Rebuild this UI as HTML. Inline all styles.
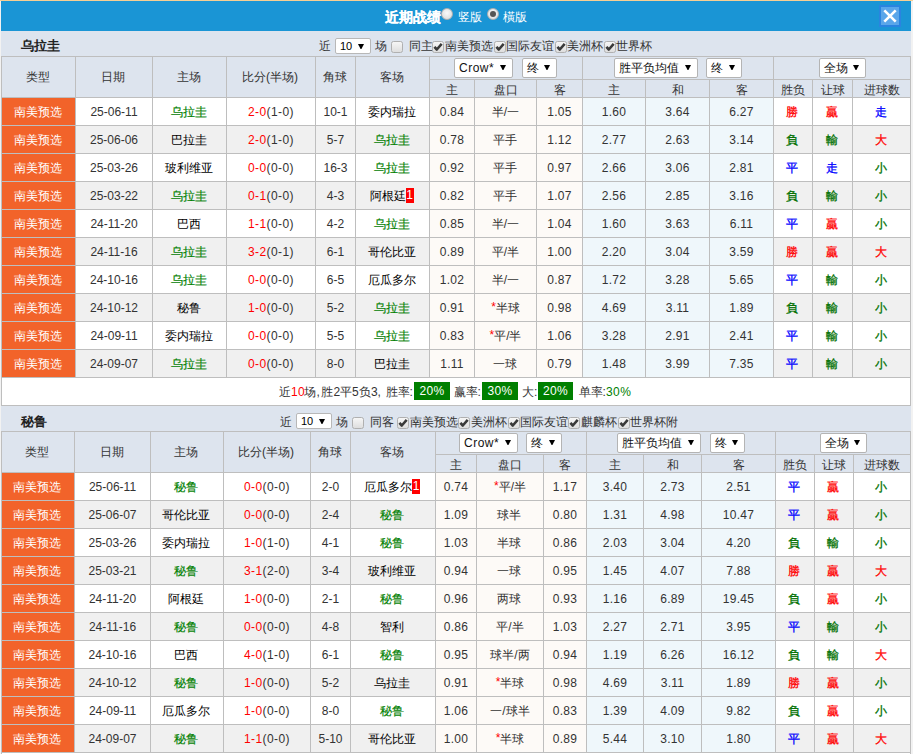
<!DOCTYPE html><html><head><meta charset="utf-8"><style>
*{margin:0;padding:0;box-sizing:border-box}
html,body{width:913px;height:754px;overflow:hidden;background:#f2f2f2;position:relative;font-family:"Liberation Sans", sans-serif;font-size:12px}
body>div,body>svg{position:absolute}
.c{text-align:center;white-space:nowrap;overflow:hidden}
.t{white-space:nowrap;line-height:14px}
.sel{background:#fff;border:1px solid #b4b4b4;border-radius:2px;color:#111;white-space:nowrap;font-size:12px;padding-left:4px}
.sel i{position:absolute;right:6px;top:6px;line-height:0}
.sel2{position:absolute;width:36px;height:16px;line-height:15px;background:#fff;border:1px solid #b8b8b8;border-radius:2px;color:#000;padding-left:4px;font-size:11px}
.sel2 i{position:absolute;right:6px;top:5px;line-height:0}
.cb{position:absolute;width:12px;height:12px;border:1px solid #b0b0b0;border-radius:2.5px;background:linear-gradient(#f6f6f6,#dedede)}
.cb svg{position:absolute;left:-1px;top:-1px}
.rad{position:absolute;width:12px;height:12px;border-radius:50%;background:radial-gradient(circle at 50% 40%,#fafafa,#d8d8d8);border:1px solid #b0b0b0}
.rad.on::after{content:"";position:absolute;left:2px;top:2px;width:6px;height:6px;border-radius:50%;background:#555}
.card{display:inline-block;background:#f00;color:#fff;font-weight:normal;width:8px;height:15px;line-height:15px;text-align:center;vertical-align:middle;margin-top:-2px}
.ast{color:#f00;vertical-align:top;position:relative;top:-1px}
.gb{position:absolute;background:#007f00;color:#fff;font-size:12px;height:18px;line-height:19px;text-align:center;letter-spacing:0.3px}
</style></head><body>
<div style="left:0px;top:0px;width:913px;height:1px;background:#f6cf94;"></div>
<div style="left:1px;top:1px;width:910px;height:30px;background:#1a95d5;"></div>
<div class="t" style="left:385px;top:8.5px;color:#fff;font-size:14px;font-weight:bold;line-height:16px;-webkit-text-stroke:0.15px #fff">近期战绩</div>
<div class="rad" style="left:441px;top:8px"></div>
<div class="t" style="left:458px;top:10px;color:#fff;font-size:12px;line-height:14px">竖版</div>
<div class="rad on" style="left:487px;top:8px"></div>
<div class="t" style="left:503px;top:10px;color:#fff;font-size:12px;line-height:14px">橫版</div>
<div style="left:879px;top:5px;width:22px;height:22px;background:#2a84e0;"></div>
<div style="left:881px;top:7px;width:18px;height:18px;background:#5aa6ea;"></div>
<svg style="position:absolute;left:883px;top:9px" width="14" height="14" viewBox="0 0 14 14"><path d="M1.3 1.3 L12.7 12.7 M12.7 1.3 L1.3 12.7" stroke="#fff" stroke-width="2.6"/></svg>
<div style="left:1px;top:31px;width:910px;height:25px;background:#dde4ee;"></div>
<div class="t" style="left:21px;top:38px;font-weight:bold;font-size:13px;color:#222;line-height:16px">乌拉圭</div>
<div class="t" style="left:319px;top:39px;color:#333333">近</div>
<div class="sel2" style="left:335px;top:38px"><span>10</span><i><svg width="6" height="5" viewBox="0 0 6 5"><path d="M0 0 H6 L3.4 5 H2.6 Z" fill="#000"/></svg></i></div>
<div class="t" style="left:375px;top:39px;color:#333333">场</div>
<div class="cb" style="left:391px;top:41px"></div>
<div class="t" style="left:409px;top:39px;color:#333333">同主</div>
<div class="cb" style="left:432px;top:41px"><svg width="12" height="12" viewBox="0 0 12 12"><path d="M2.4 5.9 L4.8 8.5 L9.7 2.9" fill="none" stroke="#3a3a3a" stroke-width="2.6" stroke-linejoin="round"/></svg></div>
<div class="t" style="left:445px;top:39px;color:#333333">南美预选</div>
<div class="cb" style="left:494px;top:41px"><svg width="12" height="12" viewBox="0 0 12 12"><path d="M2.4 5.9 L4.8 8.5 L9.7 2.9" fill="none" stroke="#3a3a3a" stroke-width="2.6" stroke-linejoin="round"/></svg></div>
<div class="t" style="left:506px;top:39px;color:#333333">国际友谊</div>
<div class="cb" style="left:555px;top:41px"><svg width="12" height="12" viewBox="0 0 12 12"><path d="M2.4 5.9 L4.8 8.5 L9.7 2.9" fill="none" stroke="#3a3a3a" stroke-width="2.6" stroke-linejoin="round"/></svg></div>
<div class="t" style="left:567px;top:39px;color:#333333">美洲杯</div>
<div class="cb" style="left:604px;top:41px"><svg width="12" height="12" viewBox="0 0 12 12"><path d="M2.4 5.9 L4.8 8.5 L9.7 2.9" fill="none" stroke="#3a3a3a" stroke-width="2.6" stroke-linejoin="round"/></svg></div>
<div class="t" style="left:616px;top:39px;color:#333333">世界杯</div>
<div style="left:1px;top:56px;width:910px;height:42px;background:#bebebe;"></div>
<div style="left:2px;top:57px;width:73px;height:40px;background:#dde4ee;"></div>
<div class="c" style="left:1px;top:57px;width:73px;height:40px;line-height:40px;color:#333333">类型</div>
<div style="left:76px;top:57px;width:76px;height:40px;background:#dde4ee;"></div>
<div class="c" style="left:75px;top:57px;width:76px;height:40px;line-height:40px;color:#333333">日期</div>
<div style="left:153px;top:57px;width:73px;height:40px;background:#dde4ee;"></div>
<div class="c" style="left:152px;top:57px;width:73px;height:40px;line-height:40px;color:#333333">主场</div>
<div style="left:227px;top:57px;width:88px;height:40px;background:#dde4ee;"></div>
<div class="c" style="left:226px;top:57px;width:88px;height:40px;line-height:40px;color:#333333">比分(半场)</div>
<div style="left:316px;top:57px;width:39px;height:40px;background:#dde4ee;"></div>
<div class="c" style="left:315px;top:57px;width:39px;height:40px;line-height:40px;color:#333333">角球</div>
<div style="left:356px;top:57px;width:73px;height:40px;background:#dde4ee;"></div>
<div class="c" style="left:355px;top:57px;width:73px;height:40px;line-height:40px;color:#333333">客场</div>
<div style="left:430px;top:57px;width:152px;height:22px;background:#dde4ee;"></div>
<div style="left:583px;top:57px;width:190px;height:22px;background:#dde4ee;"></div>
<div style="left:774px;top:57px;width:136px;height:22px;background:#dde4ee;"></div>
<div style="left:430px;top:80px;width:44px;height:17px;background:#dde4ee;"></div>
<div class="c" style="left:430px;top:82px;width:44px;height:17px;line-height:17px;color:#333333">主</div>
<div style="left:475px;top:80px;width:61px;height:17px;background:#dde4ee;"></div>
<div class="c" style="left:475px;top:82px;width:61px;height:17px;line-height:17px;color:#333333">盘口</div>
<div style="left:537px;top:80px;width:45px;height:17px;background:#dde4ee;"></div>
<div class="c" style="left:537px;top:82px;width:45px;height:17px;line-height:17px;color:#333333">客</div>
<div style="left:583px;top:80px;width:62px;height:17px;background:#dde4ee;"></div>
<div class="c" style="left:583px;top:82px;width:62px;height:17px;line-height:17px;color:#333333">主</div>
<div style="left:646px;top:80px;width:63px;height:17px;background:#dde4ee;"></div>
<div class="c" style="left:646px;top:82px;width:63px;height:17px;line-height:17px;color:#333333">和</div>
<div style="left:710px;top:80px;width:63px;height:17px;background:#dde4ee;"></div>
<div class="c" style="left:710px;top:82px;width:63px;height:17px;line-height:17px;color:#333333">客</div>
<div style="left:774px;top:80px;width:38px;height:17px;background:#dde4ee;"></div>
<div class="c" style="left:774px;top:82px;width:38px;height:17px;line-height:17px;color:#333333">胜负</div>
<div style="left:813px;top:80px;width:39px;height:17px;background:#dde4ee;"></div>
<div class="c" style="left:813px;top:82px;width:39px;height:17px;line-height:17px;color:#333333">让球</div>
<div style="left:853px;top:80px;width:57px;height:17px;background:#dde4ee;"></div>
<div class="c" style="left:853px;top:82px;width:57px;height:17px;line-height:17px;color:#333333">进球数</div>
<div class="sel" style="left:454px;top:58px;width:59px;height:20px;line-height:18px"><span style="letter-spacing:0.5px">Crow*</span><i><svg width="6" height="5" viewBox="0 0 6 5"><path d="M0 0 H6 L3.4 5 H2.6 Z" fill="#000"/></svg></i></div>
<div class="sel" style="left:522px;top:58px;width:35px;height:20px;line-height:18px"><span style="">终</span><i><svg width="6" height="5" viewBox="0 0 6 5"><path d="M0 0 H6 L3.4 5 H2.6 Z" fill="#000"/></svg></i></div>
<div class="sel" style="left:614px;top:58px;width:84px;height:20px;line-height:18px"><span style="">胜平负均值</span><i><svg width="6" height="5" viewBox="0 0 6 5"><path d="M0 0 H6 L3.4 5 H2.6 Z" fill="#000"/></svg></i></div>
<div class="sel" style="left:706px;top:58px;width:36px;height:20px;line-height:18px"><span style="">终</span><i><svg width="6" height="5" viewBox="0 0 6 5"><path d="M0 0 H6 L3.4 5 H2.6 Z" fill="#000"/></svg></i></div>
<div class="sel" style="left:819px;top:58px;width:47px;height:20px;line-height:18px"><span style="">全场</span><i><svg width="6" height="5" viewBox="0 0 6 5"><path d="M0 0 H6 L3.4 5 H2.6 Z" fill="#000"/></svg></i></div>
<div style="left:1px;top:97px;width:910px;height:29px;background:#bebebe;"></div>
<div style="left:2px;top:98px;width:73px;height:27px;background:#f2632a;"></div>
<div style="left:76px;top:98px;width:76px;height:27px;background:#ffffff;"></div>
<div style="left:153px;top:98px;width:73px;height:27px;background:#ffffff;"></div>
<div style="left:227px;top:98px;width:88px;height:27px;background:#ffffff;"></div>
<div style="left:316px;top:98px;width:39px;height:27px;background:#ffffff;"></div>
<div style="left:356px;top:98px;width:73px;height:27px;background:#ffffff;"></div>
<div style="left:430px;top:98px;width:44px;height:27px;background:#fdfaf7;"></div>
<div style="left:475px;top:98px;width:61px;height:27px;background:#fdfaf7;"></div>
<div style="left:537px;top:98px;width:45px;height:27px;background:#fdfaf7;"></div>
<div style="left:583px;top:98px;width:62px;height:27px;background:#eff7fb;"></div>
<div style="left:646px;top:98px;width:63px;height:27px;background:#eff7fb;"></div>
<div style="left:710px;top:98px;width:63px;height:27px;background:#eff7fb;"></div>
<div style="left:774px;top:98px;width:38px;height:27px;background:#ffffff;"></div>
<div style="left:813px;top:98px;width:39px;height:27px;background:#ffffff;"></div>
<div style="left:853px;top:98px;width:57px;height:27px;background:#ffffff;"></div>
<div class="c" style="left:1px;top:99px;width:73px;height:27px;line-height:27px;color:#fff">南美预选</div>
<div class="c" style="left:76px;top:99px;width:76px;height:27px;line-height:27px;color:#333333">25-06-11</div>
<div class="c" style="left:152px;top:99px;width:73px;height:27px;line-height:27px;"><span style="color:#008000;-webkit-text-stroke:0.15px currentColor">乌拉圭</span></div>
<div class="c" style="left:227px;top:99px;width:88px;height:27px;line-height:27px;color:#333333;letter-spacing:0.4px"><span style="color:#ff0000">2-0</span>(1-0)</div>
<div class="c" style="left:316px;top:99px;width:39px;height:27px;line-height:27px;color:#333333">10-1</div>
<div class="c" style="left:355px;top:99px;width:73px;height:27px;line-height:27px;"><span style="color:#000">委内瑞拉</span></div>
<div class="c" style="left:430px;top:99px;width:44px;height:27px;line-height:27px;color:#333333;letter-spacing:0.3px">0.84</div>
<div class="c" style="left:475px;top:99px;width:61px;height:27px;line-height:27px;color:#333333">半/一</div>
<div class="c" style="left:537px;top:99px;width:45px;height:27px;line-height:27px;color:#333333;letter-spacing:0.3px">1.05</div>
<div class="c" style="left:583px;top:99px;width:62px;height:27px;line-height:27px;color:#333333;letter-spacing:0.3px">1.60</div>
<div class="c" style="left:646px;top:99px;width:63px;height:27px;line-height:27px;color:#333333;letter-spacing:0.3px">3.64</div>
<div class="c" style="left:710px;top:99px;width:63px;height:27px;line-height:27px;color:#333333;letter-spacing:0.3px">6.27</div>
<div class="c" style="left:773px;top:99px;width:38px;height:27px;line-height:27px;color:#ff0000;-webkit-text-stroke:0.3px currentColor">勝</div>
<div class="c" style="left:812px;top:99px;width:39px;height:27px;line-height:27px;color:#ff0000;-webkit-text-stroke:0.3px currentColor">贏</div>
<div class="c" style="left:852px;top:99px;width:57px;height:27px;line-height:27px;color:#0000ff;-webkit-text-stroke:0.3px currentColor">走</div>
<div style="left:1px;top:125px;width:910px;height:29px;background:#bebebe;"></div>
<div style="left:2px;top:126px;width:73px;height:27px;background:#f2632a;"></div>
<div style="left:76px;top:126px;width:76px;height:27px;background:#f0f0f0;"></div>
<div style="left:153px;top:126px;width:73px;height:27px;background:#f0f0f0;"></div>
<div style="left:227px;top:126px;width:88px;height:27px;background:#f0f0f0;"></div>
<div style="left:316px;top:126px;width:39px;height:27px;background:#f0f0f0;"></div>
<div style="left:356px;top:126px;width:73px;height:27px;background:#f0f0f0;"></div>
<div style="left:430px;top:126px;width:44px;height:27px;background:#fdfaf7;"></div>
<div style="left:475px;top:126px;width:61px;height:27px;background:#fdfaf7;"></div>
<div style="left:537px;top:126px;width:45px;height:27px;background:#fdfaf7;"></div>
<div style="left:583px;top:126px;width:62px;height:27px;background:#eff7fb;"></div>
<div style="left:646px;top:126px;width:63px;height:27px;background:#eff7fb;"></div>
<div style="left:710px;top:126px;width:63px;height:27px;background:#eff7fb;"></div>
<div style="left:774px;top:126px;width:38px;height:27px;background:#f0f0f0;"></div>
<div style="left:813px;top:126px;width:39px;height:27px;background:#f0f0f0;"></div>
<div style="left:853px;top:126px;width:57px;height:27px;background:#f0f0f0;"></div>
<div class="c" style="left:1px;top:127px;width:73px;height:27px;line-height:27px;color:#fff">南美预选</div>
<div class="c" style="left:76px;top:127px;width:76px;height:27px;line-height:27px;color:#333333">25-06-06</div>
<div class="c" style="left:152px;top:127px;width:73px;height:27px;line-height:27px;"><span style="color:#000">巴拉圭</span></div>
<div class="c" style="left:227px;top:127px;width:88px;height:27px;line-height:27px;color:#333333;letter-spacing:0.4px"><span style="color:#ff0000">2-0</span>(1-0)</div>
<div class="c" style="left:316px;top:127px;width:39px;height:27px;line-height:27px;color:#333333">5-7</div>
<div class="c" style="left:355px;top:127px;width:73px;height:27px;line-height:27px;"><span style="color:#008000;-webkit-text-stroke:0.15px currentColor">乌拉圭</span></div>
<div class="c" style="left:430px;top:127px;width:44px;height:27px;line-height:27px;color:#333333;letter-spacing:0.3px">0.78</div>
<div class="c" style="left:474px;top:127px;width:61px;height:27px;line-height:27px;color:#333333">平手</div>
<div class="c" style="left:537px;top:127px;width:45px;height:27px;line-height:27px;color:#333333;letter-spacing:0.3px">1.12</div>
<div class="c" style="left:583px;top:127px;width:62px;height:27px;line-height:27px;color:#333333;letter-spacing:0.3px">2.77</div>
<div class="c" style="left:646px;top:127px;width:63px;height:27px;line-height:27px;color:#333333;letter-spacing:0.3px">2.63</div>
<div class="c" style="left:710px;top:127px;width:63px;height:27px;line-height:27px;color:#333333;letter-spacing:0.3px">3.14</div>
<div class="c" style="left:773px;top:127px;width:38px;height:27px;line-height:27px;color:#007000;-webkit-text-stroke:0.3px currentColor">負</div>
<div class="c" style="left:812px;top:127px;width:39px;height:27px;line-height:27px;color:#007000;-webkit-text-stroke:0.3px currentColor">輸</div>
<div class="c" style="left:852px;top:127px;width:57px;height:27px;line-height:27px;color:#ff0000;-webkit-text-stroke:0.3px currentColor">大</div>
<div style="left:1px;top:153px;width:910px;height:29px;background:#bebebe;"></div>
<div style="left:2px;top:154px;width:73px;height:27px;background:#f2632a;"></div>
<div style="left:76px;top:154px;width:76px;height:27px;background:#ffffff;"></div>
<div style="left:153px;top:154px;width:73px;height:27px;background:#ffffff;"></div>
<div style="left:227px;top:154px;width:88px;height:27px;background:#ffffff;"></div>
<div style="left:316px;top:154px;width:39px;height:27px;background:#ffffff;"></div>
<div style="left:356px;top:154px;width:73px;height:27px;background:#ffffff;"></div>
<div style="left:430px;top:154px;width:44px;height:27px;background:#fdfaf7;"></div>
<div style="left:475px;top:154px;width:61px;height:27px;background:#fdfaf7;"></div>
<div style="left:537px;top:154px;width:45px;height:27px;background:#fdfaf7;"></div>
<div style="left:583px;top:154px;width:62px;height:27px;background:#eff7fb;"></div>
<div style="left:646px;top:154px;width:63px;height:27px;background:#eff7fb;"></div>
<div style="left:710px;top:154px;width:63px;height:27px;background:#eff7fb;"></div>
<div style="left:774px;top:154px;width:38px;height:27px;background:#ffffff;"></div>
<div style="left:813px;top:154px;width:39px;height:27px;background:#ffffff;"></div>
<div style="left:853px;top:154px;width:57px;height:27px;background:#ffffff;"></div>
<div class="c" style="left:1px;top:155px;width:73px;height:27px;line-height:27px;color:#fff">南美预选</div>
<div class="c" style="left:76px;top:155px;width:76px;height:27px;line-height:27px;color:#333333">25-03-26</div>
<div class="c" style="left:152px;top:155px;width:73px;height:27px;line-height:27px;"><span style="color:#000">玻利维亚</span></div>
<div class="c" style="left:227px;top:155px;width:88px;height:27px;line-height:27px;color:#333333;letter-spacing:0.4px"><span style="color:#ff0000">0-0</span>(0-0)</div>
<div class="c" style="left:316px;top:155px;width:39px;height:27px;line-height:27px;color:#333333">16-3</div>
<div class="c" style="left:355px;top:155px;width:73px;height:27px;line-height:27px;"><span style="color:#008000;-webkit-text-stroke:0.15px currentColor">乌拉圭</span></div>
<div class="c" style="left:430px;top:155px;width:44px;height:27px;line-height:27px;color:#333333;letter-spacing:0.3px">0.92</div>
<div class="c" style="left:474px;top:155px;width:61px;height:27px;line-height:27px;color:#333333">平手</div>
<div class="c" style="left:537px;top:155px;width:45px;height:27px;line-height:27px;color:#333333;letter-spacing:0.3px">0.97</div>
<div class="c" style="left:583px;top:155px;width:62px;height:27px;line-height:27px;color:#333333;letter-spacing:0.3px">2.66</div>
<div class="c" style="left:646px;top:155px;width:63px;height:27px;line-height:27px;color:#333333;letter-spacing:0.3px">3.06</div>
<div class="c" style="left:710px;top:155px;width:63px;height:27px;line-height:27px;color:#333333;letter-spacing:0.3px">2.81</div>
<div class="c" style="left:773px;top:155px;width:38px;height:27px;line-height:27px;color:#0000ff;-webkit-text-stroke:0.3px currentColor">平</div>
<div class="c" style="left:812px;top:155px;width:39px;height:27px;line-height:27px;color:#0000ff;-webkit-text-stroke:0.3px currentColor">走</div>
<div class="c" style="left:852px;top:155px;width:57px;height:27px;line-height:27px;color:#007000;-webkit-text-stroke:0.3px currentColor">小</div>
<div style="left:1px;top:181px;width:910px;height:29px;background:#bebebe;"></div>
<div style="left:2px;top:182px;width:73px;height:27px;background:#f2632a;"></div>
<div style="left:76px;top:182px;width:76px;height:27px;background:#f0f0f0;"></div>
<div style="left:153px;top:182px;width:73px;height:27px;background:#f0f0f0;"></div>
<div style="left:227px;top:182px;width:88px;height:27px;background:#f0f0f0;"></div>
<div style="left:316px;top:182px;width:39px;height:27px;background:#f0f0f0;"></div>
<div style="left:356px;top:182px;width:73px;height:27px;background:#f0f0f0;"></div>
<div style="left:430px;top:182px;width:44px;height:27px;background:#fdfaf7;"></div>
<div style="left:475px;top:182px;width:61px;height:27px;background:#fdfaf7;"></div>
<div style="left:537px;top:182px;width:45px;height:27px;background:#fdfaf7;"></div>
<div style="left:583px;top:182px;width:62px;height:27px;background:#eff7fb;"></div>
<div style="left:646px;top:182px;width:63px;height:27px;background:#eff7fb;"></div>
<div style="left:710px;top:182px;width:63px;height:27px;background:#eff7fb;"></div>
<div style="left:774px;top:182px;width:38px;height:27px;background:#f0f0f0;"></div>
<div style="left:813px;top:182px;width:39px;height:27px;background:#f0f0f0;"></div>
<div style="left:853px;top:182px;width:57px;height:27px;background:#f0f0f0;"></div>
<div class="c" style="left:1px;top:183px;width:73px;height:27px;line-height:27px;color:#fff">南美预选</div>
<div class="c" style="left:76px;top:183px;width:76px;height:27px;line-height:27px;color:#333333">25-03-22</div>
<div class="c" style="left:152px;top:183px;width:73px;height:27px;line-height:27px;"><span style="color:#008000;-webkit-text-stroke:0.15px currentColor">乌拉圭</span></div>
<div class="c" style="left:227px;top:183px;width:88px;height:27px;line-height:27px;color:#333333;letter-spacing:0.4px"><span style="color:#ff0000">0-1</span>(0-0)</div>
<div class="c" style="left:316px;top:183px;width:39px;height:27px;line-height:27px;color:#333333">4-3</div>
<div class="c" style="left:355px;top:183px;width:73px;height:27px;line-height:27px;"><span style="color:#000">阿根廷</span><b class="card">1</b></div>
<div class="c" style="left:430px;top:183px;width:44px;height:27px;line-height:27px;color:#333333;letter-spacing:0.3px">0.82</div>
<div class="c" style="left:474px;top:183px;width:61px;height:27px;line-height:27px;color:#333333">平手</div>
<div class="c" style="left:537px;top:183px;width:45px;height:27px;line-height:27px;color:#333333;letter-spacing:0.3px">1.07</div>
<div class="c" style="left:583px;top:183px;width:62px;height:27px;line-height:27px;color:#333333;letter-spacing:0.3px">2.56</div>
<div class="c" style="left:646px;top:183px;width:63px;height:27px;line-height:27px;color:#333333;letter-spacing:0.3px">2.85</div>
<div class="c" style="left:710px;top:183px;width:63px;height:27px;line-height:27px;color:#333333;letter-spacing:0.3px">3.16</div>
<div class="c" style="left:773px;top:183px;width:38px;height:27px;line-height:27px;color:#007000;-webkit-text-stroke:0.3px currentColor">負</div>
<div class="c" style="left:812px;top:183px;width:39px;height:27px;line-height:27px;color:#007000;-webkit-text-stroke:0.3px currentColor">輸</div>
<div class="c" style="left:852px;top:183px;width:57px;height:27px;line-height:27px;color:#007000;-webkit-text-stroke:0.3px currentColor">小</div>
<div style="left:1px;top:209px;width:910px;height:29px;background:#bebebe;"></div>
<div style="left:2px;top:210px;width:73px;height:27px;background:#f2632a;"></div>
<div style="left:76px;top:210px;width:76px;height:27px;background:#ffffff;"></div>
<div style="left:153px;top:210px;width:73px;height:27px;background:#ffffff;"></div>
<div style="left:227px;top:210px;width:88px;height:27px;background:#ffffff;"></div>
<div style="left:316px;top:210px;width:39px;height:27px;background:#ffffff;"></div>
<div style="left:356px;top:210px;width:73px;height:27px;background:#ffffff;"></div>
<div style="left:430px;top:210px;width:44px;height:27px;background:#fdfaf7;"></div>
<div style="left:475px;top:210px;width:61px;height:27px;background:#fdfaf7;"></div>
<div style="left:537px;top:210px;width:45px;height:27px;background:#fdfaf7;"></div>
<div style="left:583px;top:210px;width:62px;height:27px;background:#eff7fb;"></div>
<div style="left:646px;top:210px;width:63px;height:27px;background:#eff7fb;"></div>
<div style="left:710px;top:210px;width:63px;height:27px;background:#eff7fb;"></div>
<div style="left:774px;top:210px;width:38px;height:27px;background:#ffffff;"></div>
<div style="left:813px;top:210px;width:39px;height:27px;background:#ffffff;"></div>
<div style="left:853px;top:210px;width:57px;height:27px;background:#ffffff;"></div>
<div class="c" style="left:1px;top:211px;width:73px;height:27px;line-height:27px;color:#fff">南美预选</div>
<div class="c" style="left:76px;top:211px;width:76px;height:27px;line-height:27px;color:#333333">24-11-20</div>
<div class="c" style="left:152px;top:211px;width:73px;height:27px;line-height:27px;"><span style="color:#000">巴西</span></div>
<div class="c" style="left:227px;top:211px;width:88px;height:27px;line-height:27px;color:#333333;letter-spacing:0.4px"><span style="color:#ff0000">1-1</span>(0-0)</div>
<div class="c" style="left:316px;top:211px;width:39px;height:27px;line-height:27px;color:#333333">4-2</div>
<div class="c" style="left:355px;top:211px;width:73px;height:27px;line-height:27px;"><span style="color:#008000;-webkit-text-stroke:0.15px currentColor">乌拉圭</span></div>
<div class="c" style="left:430px;top:211px;width:44px;height:27px;line-height:27px;color:#333333;letter-spacing:0.3px">0.85</div>
<div class="c" style="left:475px;top:211px;width:61px;height:27px;line-height:27px;color:#333333">半/一</div>
<div class="c" style="left:537px;top:211px;width:45px;height:27px;line-height:27px;color:#333333;letter-spacing:0.3px">1.04</div>
<div class="c" style="left:583px;top:211px;width:62px;height:27px;line-height:27px;color:#333333;letter-spacing:0.3px">1.60</div>
<div class="c" style="left:646px;top:211px;width:63px;height:27px;line-height:27px;color:#333333;letter-spacing:0.3px">3.63</div>
<div class="c" style="left:710px;top:211px;width:63px;height:27px;line-height:27px;color:#333333;letter-spacing:0.3px">6.11</div>
<div class="c" style="left:773px;top:211px;width:38px;height:27px;line-height:27px;color:#0000ff;-webkit-text-stroke:0.3px currentColor">平</div>
<div class="c" style="left:812px;top:211px;width:39px;height:27px;line-height:27px;color:#ff0000;-webkit-text-stroke:0.3px currentColor">贏</div>
<div class="c" style="left:852px;top:211px;width:57px;height:27px;line-height:27px;color:#007000;-webkit-text-stroke:0.3px currentColor">小</div>
<div style="left:1px;top:237px;width:910px;height:29px;background:#bebebe;"></div>
<div style="left:2px;top:238px;width:73px;height:27px;background:#f2632a;"></div>
<div style="left:76px;top:238px;width:76px;height:27px;background:#f0f0f0;"></div>
<div style="left:153px;top:238px;width:73px;height:27px;background:#f0f0f0;"></div>
<div style="left:227px;top:238px;width:88px;height:27px;background:#f0f0f0;"></div>
<div style="left:316px;top:238px;width:39px;height:27px;background:#f0f0f0;"></div>
<div style="left:356px;top:238px;width:73px;height:27px;background:#f0f0f0;"></div>
<div style="left:430px;top:238px;width:44px;height:27px;background:#fdfaf7;"></div>
<div style="left:475px;top:238px;width:61px;height:27px;background:#fdfaf7;"></div>
<div style="left:537px;top:238px;width:45px;height:27px;background:#fdfaf7;"></div>
<div style="left:583px;top:238px;width:62px;height:27px;background:#eff7fb;"></div>
<div style="left:646px;top:238px;width:63px;height:27px;background:#eff7fb;"></div>
<div style="left:710px;top:238px;width:63px;height:27px;background:#eff7fb;"></div>
<div style="left:774px;top:238px;width:38px;height:27px;background:#f0f0f0;"></div>
<div style="left:813px;top:238px;width:39px;height:27px;background:#f0f0f0;"></div>
<div style="left:853px;top:238px;width:57px;height:27px;background:#f0f0f0;"></div>
<div class="c" style="left:1px;top:239px;width:73px;height:27px;line-height:27px;color:#fff">南美预选</div>
<div class="c" style="left:76px;top:239px;width:76px;height:27px;line-height:27px;color:#333333">24-11-16</div>
<div class="c" style="left:152px;top:239px;width:73px;height:27px;line-height:27px;"><span style="color:#008000;-webkit-text-stroke:0.15px currentColor">乌拉圭</span></div>
<div class="c" style="left:227px;top:239px;width:88px;height:27px;line-height:27px;color:#333333;letter-spacing:0.4px"><span style="color:#ff0000">3-2</span>(0-1)</div>
<div class="c" style="left:316px;top:239px;width:39px;height:27px;line-height:27px;color:#333333">6-1</div>
<div class="c" style="left:355px;top:239px;width:73px;height:27px;line-height:27px;"><span style="color:#000">哥伦比亚</span></div>
<div class="c" style="left:430px;top:239px;width:44px;height:27px;line-height:27px;color:#333333;letter-spacing:0.3px">0.89</div>
<div class="c" style="left:475px;top:239px;width:61px;height:27px;line-height:27px;color:#333333">平/半</div>
<div class="c" style="left:537px;top:239px;width:45px;height:27px;line-height:27px;color:#333333;letter-spacing:0.3px">1.00</div>
<div class="c" style="left:583px;top:239px;width:62px;height:27px;line-height:27px;color:#333333;letter-spacing:0.3px">2.20</div>
<div class="c" style="left:646px;top:239px;width:63px;height:27px;line-height:27px;color:#333333;letter-spacing:0.3px">3.04</div>
<div class="c" style="left:710px;top:239px;width:63px;height:27px;line-height:27px;color:#333333;letter-spacing:0.3px">3.59</div>
<div class="c" style="left:773px;top:239px;width:38px;height:27px;line-height:27px;color:#ff0000;-webkit-text-stroke:0.3px currentColor">勝</div>
<div class="c" style="left:812px;top:239px;width:39px;height:27px;line-height:27px;color:#ff0000;-webkit-text-stroke:0.3px currentColor">贏</div>
<div class="c" style="left:852px;top:239px;width:57px;height:27px;line-height:27px;color:#ff0000;-webkit-text-stroke:0.3px currentColor">大</div>
<div style="left:1px;top:265px;width:910px;height:29px;background:#bebebe;"></div>
<div style="left:2px;top:266px;width:73px;height:27px;background:#f2632a;"></div>
<div style="left:76px;top:266px;width:76px;height:27px;background:#ffffff;"></div>
<div style="left:153px;top:266px;width:73px;height:27px;background:#ffffff;"></div>
<div style="left:227px;top:266px;width:88px;height:27px;background:#ffffff;"></div>
<div style="left:316px;top:266px;width:39px;height:27px;background:#ffffff;"></div>
<div style="left:356px;top:266px;width:73px;height:27px;background:#ffffff;"></div>
<div style="left:430px;top:266px;width:44px;height:27px;background:#fdfaf7;"></div>
<div style="left:475px;top:266px;width:61px;height:27px;background:#fdfaf7;"></div>
<div style="left:537px;top:266px;width:45px;height:27px;background:#fdfaf7;"></div>
<div style="left:583px;top:266px;width:62px;height:27px;background:#eff7fb;"></div>
<div style="left:646px;top:266px;width:63px;height:27px;background:#eff7fb;"></div>
<div style="left:710px;top:266px;width:63px;height:27px;background:#eff7fb;"></div>
<div style="left:774px;top:266px;width:38px;height:27px;background:#ffffff;"></div>
<div style="left:813px;top:266px;width:39px;height:27px;background:#ffffff;"></div>
<div style="left:853px;top:266px;width:57px;height:27px;background:#ffffff;"></div>
<div class="c" style="left:1px;top:267px;width:73px;height:27px;line-height:27px;color:#fff">南美预选</div>
<div class="c" style="left:76px;top:267px;width:76px;height:27px;line-height:27px;color:#333333">24-10-16</div>
<div class="c" style="left:152px;top:267px;width:73px;height:27px;line-height:27px;"><span style="color:#008000;-webkit-text-stroke:0.15px currentColor">乌拉圭</span></div>
<div class="c" style="left:227px;top:267px;width:88px;height:27px;line-height:27px;color:#333333;letter-spacing:0.4px"><span style="color:#ff0000">0-0</span>(0-0)</div>
<div class="c" style="left:316px;top:267px;width:39px;height:27px;line-height:27px;color:#333333">6-5</div>
<div class="c" style="left:355px;top:267px;width:73px;height:27px;line-height:27px;"><span style="color:#000">厄瓜多尔</span></div>
<div class="c" style="left:430px;top:267px;width:44px;height:27px;line-height:27px;color:#333333;letter-spacing:0.3px">1.02</div>
<div class="c" style="left:475px;top:267px;width:61px;height:27px;line-height:27px;color:#333333">半/一</div>
<div class="c" style="left:537px;top:267px;width:45px;height:27px;line-height:27px;color:#333333;letter-spacing:0.3px">0.87</div>
<div class="c" style="left:583px;top:267px;width:62px;height:27px;line-height:27px;color:#333333;letter-spacing:0.3px">1.72</div>
<div class="c" style="left:646px;top:267px;width:63px;height:27px;line-height:27px;color:#333333;letter-spacing:0.3px">3.28</div>
<div class="c" style="left:710px;top:267px;width:63px;height:27px;line-height:27px;color:#333333;letter-spacing:0.3px">5.65</div>
<div class="c" style="left:773px;top:267px;width:38px;height:27px;line-height:27px;color:#0000ff;-webkit-text-stroke:0.3px currentColor">平</div>
<div class="c" style="left:812px;top:267px;width:39px;height:27px;line-height:27px;color:#007000;-webkit-text-stroke:0.3px currentColor">輸</div>
<div class="c" style="left:852px;top:267px;width:57px;height:27px;line-height:27px;color:#007000;-webkit-text-stroke:0.3px currentColor">小</div>
<div style="left:1px;top:293px;width:910px;height:29px;background:#bebebe;"></div>
<div style="left:2px;top:294px;width:73px;height:27px;background:#f2632a;"></div>
<div style="left:76px;top:294px;width:76px;height:27px;background:#f0f0f0;"></div>
<div style="left:153px;top:294px;width:73px;height:27px;background:#f0f0f0;"></div>
<div style="left:227px;top:294px;width:88px;height:27px;background:#f0f0f0;"></div>
<div style="left:316px;top:294px;width:39px;height:27px;background:#f0f0f0;"></div>
<div style="left:356px;top:294px;width:73px;height:27px;background:#f0f0f0;"></div>
<div style="left:430px;top:294px;width:44px;height:27px;background:#fdfaf7;"></div>
<div style="left:475px;top:294px;width:61px;height:27px;background:#fdfaf7;"></div>
<div style="left:537px;top:294px;width:45px;height:27px;background:#fdfaf7;"></div>
<div style="left:583px;top:294px;width:62px;height:27px;background:#eff7fb;"></div>
<div style="left:646px;top:294px;width:63px;height:27px;background:#eff7fb;"></div>
<div style="left:710px;top:294px;width:63px;height:27px;background:#eff7fb;"></div>
<div style="left:774px;top:294px;width:38px;height:27px;background:#f0f0f0;"></div>
<div style="left:813px;top:294px;width:39px;height:27px;background:#f0f0f0;"></div>
<div style="left:853px;top:294px;width:57px;height:27px;background:#f0f0f0;"></div>
<div class="c" style="left:1px;top:295px;width:73px;height:27px;line-height:27px;color:#fff">南美预选</div>
<div class="c" style="left:76px;top:295px;width:76px;height:27px;line-height:27px;color:#333333">24-10-12</div>
<div class="c" style="left:152px;top:295px;width:73px;height:27px;line-height:27px;"><span style="color:#000">秘鲁</span></div>
<div class="c" style="left:227px;top:295px;width:88px;height:27px;line-height:27px;color:#333333;letter-spacing:0.4px"><span style="color:#ff0000">1-0</span>(0-0)</div>
<div class="c" style="left:316px;top:295px;width:39px;height:27px;line-height:27px;color:#333333">5-2</div>
<div class="c" style="left:355px;top:295px;width:73px;height:27px;line-height:27px;"><span style="color:#008000;-webkit-text-stroke:0.15px currentColor">乌拉圭</span></div>
<div class="c" style="left:430px;top:295px;width:44px;height:27px;line-height:27px;color:#333333;letter-spacing:0.3px">0.91</div>
<div class="c" style="left:475px;top:295px;width:61px;height:27px;line-height:27px;color:#333333"><span class="ast">*</span>半球</div>
<div class="c" style="left:537px;top:295px;width:45px;height:27px;line-height:27px;color:#333333;letter-spacing:0.3px">0.98</div>
<div class="c" style="left:583px;top:295px;width:62px;height:27px;line-height:27px;color:#333333;letter-spacing:0.3px">4.69</div>
<div class="c" style="left:646px;top:295px;width:63px;height:27px;line-height:27px;color:#333333;letter-spacing:0.3px">3.11</div>
<div class="c" style="left:710px;top:295px;width:63px;height:27px;line-height:27px;color:#333333;letter-spacing:0.3px">1.89</div>
<div class="c" style="left:773px;top:295px;width:38px;height:27px;line-height:27px;color:#007000;-webkit-text-stroke:0.3px currentColor">負</div>
<div class="c" style="left:812px;top:295px;width:39px;height:27px;line-height:27px;color:#007000;-webkit-text-stroke:0.3px currentColor">輸</div>
<div class="c" style="left:852px;top:295px;width:57px;height:27px;line-height:27px;color:#007000;-webkit-text-stroke:0.3px currentColor">小</div>
<div style="left:1px;top:321px;width:910px;height:29px;background:#bebebe;"></div>
<div style="left:2px;top:322px;width:73px;height:27px;background:#f2632a;"></div>
<div style="left:76px;top:322px;width:76px;height:27px;background:#ffffff;"></div>
<div style="left:153px;top:322px;width:73px;height:27px;background:#ffffff;"></div>
<div style="left:227px;top:322px;width:88px;height:27px;background:#ffffff;"></div>
<div style="left:316px;top:322px;width:39px;height:27px;background:#ffffff;"></div>
<div style="left:356px;top:322px;width:73px;height:27px;background:#ffffff;"></div>
<div style="left:430px;top:322px;width:44px;height:27px;background:#fdfaf7;"></div>
<div style="left:475px;top:322px;width:61px;height:27px;background:#fdfaf7;"></div>
<div style="left:537px;top:322px;width:45px;height:27px;background:#fdfaf7;"></div>
<div style="left:583px;top:322px;width:62px;height:27px;background:#eff7fb;"></div>
<div style="left:646px;top:322px;width:63px;height:27px;background:#eff7fb;"></div>
<div style="left:710px;top:322px;width:63px;height:27px;background:#eff7fb;"></div>
<div style="left:774px;top:322px;width:38px;height:27px;background:#ffffff;"></div>
<div style="left:813px;top:322px;width:39px;height:27px;background:#ffffff;"></div>
<div style="left:853px;top:322px;width:57px;height:27px;background:#ffffff;"></div>
<div class="c" style="left:1px;top:323px;width:73px;height:27px;line-height:27px;color:#fff">南美预选</div>
<div class="c" style="left:76px;top:323px;width:76px;height:27px;line-height:27px;color:#333333">24-09-11</div>
<div class="c" style="left:152px;top:323px;width:73px;height:27px;line-height:27px;"><span style="color:#000">委内瑞拉</span></div>
<div class="c" style="left:227px;top:323px;width:88px;height:27px;line-height:27px;color:#333333;letter-spacing:0.4px"><span style="color:#ff0000">0-0</span>(0-0)</div>
<div class="c" style="left:316px;top:323px;width:39px;height:27px;line-height:27px;color:#333333">5-5</div>
<div class="c" style="left:355px;top:323px;width:73px;height:27px;line-height:27px;"><span style="color:#008000;-webkit-text-stroke:0.15px currentColor">乌拉圭</span></div>
<div class="c" style="left:430px;top:323px;width:44px;height:27px;line-height:27px;color:#333333;letter-spacing:0.3px">0.83</div>
<div class="c" style="left:475px;top:323px;width:61px;height:27px;line-height:27px;color:#333333"><span class="ast">*</span>平/半</div>
<div class="c" style="left:537px;top:323px;width:45px;height:27px;line-height:27px;color:#333333;letter-spacing:0.3px">1.06</div>
<div class="c" style="left:583px;top:323px;width:62px;height:27px;line-height:27px;color:#333333;letter-spacing:0.3px">3.28</div>
<div class="c" style="left:646px;top:323px;width:63px;height:27px;line-height:27px;color:#333333;letter-spacing:0.3px">2.91</div>
<div class="c" style="left:710px;top:323px;width:63px;height:27px;line-height:27px;color:#333333;letter-spacing:0.3px">2.41</div>
<div class="c" style="left:773px;top:323px;width:38px;height:27px;line-height:27px;color:#0000ff;-webkit-text-stroke:0.3px currentColor">平</div>
<div class="c" style="left:812px;top:323px;width:39px;height:27px;line-height:27px;color:#007000;-webkit-text-stroke:0.3px currentColor">輸</div>
<div class="c" style="left:852px;top:323px;width:57px;height:27px;line-height:27px;color:#007000;-webkit-text-stroke:0.3px currentColor">小</div>
<div style="left:1px;top:349px;width:910px;height:29px;background:#bebebe;"></div>
<div style="left:2px;top:350px;width:73px;height:27px;background:#f2632a;"></div>
<div style="left:76px;top:350px;width:76px;height:27px;background:#f0f0f0;"></div>
<div style="left:153px;top:350px;width:73px;height:27px;background:#f0f0f0;"></div>
<div style="left:227px;top:350px;width:88px;height:27px;background:#f0f0f0;"></div>
<div style="left:316px;top:350px;width:39px;height:27px;background:#f0f0f0;"></div>
<div style="left:356px;top:350px;width:73px;height:27px;background:#f0f0f0;"></div>
<div style="left:430px;top:350px;width:44px;height:27px;background:#fdfaf7;"></div>
<div style="left:475px;top:350px;width:61px;height:27px;background:#fdfaf7;"></div>
<div style="left:537px;top:350px;width:45px;height:27px;background:#fdfaf7;"></div>
<div style="left:583px;top:350px;width:62px;height:27px;background:#eff7fb;"></div>
<div style="left:646px;top:350px;width:63px;height:27px;background:#eff7fb;"></div>
<div style="left:710px;top:350px;width:63px;height:27px;background:#eff7fb;"></div>
<div style="left:774px;top:350px;width:38px;height:27px;background:#f0f0f0;"></div>
<div style="left:813px;top:350px;width:39px;height:27px;background:#f0f0f0;"></div>
<div style="left:853px;top:350px;width:57px;height:27px;background:#f0f0f0;"></div>
<div class="c" style="left:1px;top:351px;width:73px;height:27px;line-height:27px;color:#fff">南美预选</div>
<div class="c" style="left:76px;top:351px;width:76px;height:27px;line-height:27px;color:#333333">24-09-07</div>
<div class="c" style="left:152px;top:351px;width:73px;height:27px;line-height:27px;"><span style="color:#008000;-webkit-text-stroke:0.15px currentColor">乌拉圭</span></div>
<div class="c" style="left:227px;top:351px;width:88px;height:27px;line-height:27px;color:#333333;letter-spacing:0.4px"><span style="color:#ff0000">0-0</span>(0-0)</div>
<div class="c" style="left:316px;top:351px;width:39px;height:27px;line-height:27px;color:#333333">8-0</div>
<div class="c" style="left:355px;top:351px;width:73px;height:27px;line-height:27px;"><span style="color:#000">巴拉圭</span></div>
<div class="c" style="left:430px;top:351px;width:44px;height:27px;line-height:27px;color:#333333;letter-spacing:0.3px">1.11</div>
<div class="c" style="left:474px;top:351px;width:61px;height:27px;line-height:27px;color:#333333">一球</div>
<div class="c" style="left:537px;top:351px;width:45px;height:27px;line-height:27px;color:#333333;letter-spacing:0.3px">0.79</div>
<div class="c" style="left:583px;top:351px;width:62px;height:27px;line-height:27px;color:#333333;letter-spacing:0.3px">1.48</div>
<div class="c" style="left:646px;top:351px;width:63px;height:27px;line-height:27px;color:#333333;letter-spacing:0.3px">3.99</div>
<div class="c" style="left:710px;top:351px;width:63px;height:27px;line-height:27px;color:#333333;letter-spacing:0.3px">7.35</div>
<div class="c" style="left:773px;top:351px;width:38px;height:27px;line-height:27px;color:#0000ff;-webkit-text-stroke:0.3px currentColor">平</div>
<div class="c" style="left:812px;top:351px;width:39px;height:27px;line-height:27px;color:#007000;-webkit-text-stroke:0.3px currentColor">輸</div>
<div class="c" style="left:852px;top:351px;width:57px;height:27px;line-height:27px;color:#007000;-webkit-text-stroke:0.3px currentColor">小</div>
<div style="left:1px;top:377px;width:910px;height:29px;background:#bebebe;"></div>
<div style="left:2px;top:378px;width:908px;height:27px;background:#ffffff;"></div>
<div class="t" style="left:279px;top:378px;height:27px;line-height:28px;color:#333333;">近</div>
<div class="t" style="left:291px;top:378px;height:27px;line-height:28px;color:#333333;color:#f00;letter-spacing:0.3px">10</div>
<div class="t" style="left:304px;top:378px;height:27px;line-height:28px;color:#333333;">场</div>
<div class="t" style="left:316.5px;top:378px;height:27px;line-height:28px;color:#333333;">,</div>
<div class="t" style="left:320.5px;top:378px;height:27px;line-height:28px;color:#333333;">胜</div>
<div class="t" style="left:333.5px;top:378px;height:27px;line-height:28px;color:#333333;">2</div>
<div class="t" style="left:340px;top:378px;height:27px;line-height:28px;color:#333333;">平</div>
<div class="t" style="left:352px;top:378px;height:27px;line-height:28px;color:#333333;">5</div>
<div class="t" style="left:358.5px;top:378px;height:27px;line-height:28px;color:#333333;">负</div>
<div class="t" style="left:371px;top:378px;height:27px;line-height:28px;color:#333333;">3</div>
<div class="t" style="left:377.5px;top:378px;height:27px;line-height:28px;color:#333333;">,</div>
<div class="t" style="left:385.5px;top:378px;height:27px;line-height:28px;color:#333333;">胜率:</div>
<div class="t" style="left:453.5px;top:378px;height:27px;line-height:28px;color:#333333;">赢率:</div>
<div class="t" style="left:522px;top:378px;height:27px;line-height:28px;color:#333333;">大:</div>
<div class="t" style="left:578.5px;top:378px;height:27px;line-height:28px;color:#333333;">单率:</div>
<div class="t" style="left:606px;top:378px;height:27px;line-height:28px;color:#333333;color:#008000;letter-spacing:0.4px">30%</div>
<div class="gb" style="left:414px;top:382px;width:36px">20%</div>
<div class="gb" style="left:482px;top:382px;width:36px">30%</div>
<div class="gb" style="left:538px;top:382px;width:35px">20%</div>
<div style="left:1px;top:406px;width:910px;height:25px;background:#dde4ee;"></div>
<div class="t" style="left:21px;top:414px;font-weight:bold;font-size:13px;color:#222;line-height:16px">秘鲁</div>
<div class="t" style="left:280px;top:415px;color:#333333">近</div>
<div class="sel2" style="left:296px;top:413px"><span>10</span><i><svg width="6" height="5" viewBox="0 0 6 5"><path d="M0 0 H6 L3.4 5 H2.6 Z" fill="#000"/></svg></i></div>
<div class="t" style="left:336px;top:415px;color:#333333">场</div>
<div class="cb" style="left:352px;top:417px"></div>
<div class="t" style="left:370px;top:415px;color:#333333">同客</div>
<div class="cb" style="left:397px;top:417px"><svg width="12" height="12" viewBox="0 0 12 12"><path d="M2.4 5.9 L4.8 8.5 L9.7 2.9" fill="none" stroke="#3a3a3a" stroke-width="2.6" stroke-linejoin="round"/></svg></div>
<div class="t" style="left:410px;top:415px;color:#333333">南美预选</div>
<div class="cb" style="left:458px;top:417px"><svg width="12" height="12" viewBox="0 0 12 12"><path d="M2.4 5.9 L4.8 8.5 L9.7 2.9" fill="none" stroke="#3a3a3a" stroke-width="2.6" stroke-linejoin="round"/></svg></div>
<div class="t" style="left:471px;top:415px;color:#333333">美洲杯</div>
<div class="cb" style="left:508px;top:417px"><svg width="12" height="12" viewBox="0 0 12 12"><path d="M2.4 5.9 L4.8 8.5 L9.7 2.9" fill="none" stroke="#3a3a3a" stroke-width="2.6" stroke-linejoin="round"/></svg></div>
<div class="t" style="left:520px;top:415px;color:#333333">国际友谊</div>
<div class="cb" style="left:568px;top:417px"><svg width="12" height="12" viewBox="0 0 12 12"><path d="M2.4 5.9 L4.8 8.5 L9.7 2.9" fill="none" stroke="#3a3a3a" stroke-width="2.6" stroke-linejoin="round"/></svg></div>
<div class="t" style="left:581px;top:415px;color:#333333">麒麟杯</div>
<div class="cb" style="left:618px;top:417px"><svg width="12" height="12" viewBox="0 0 12 12"><path d="M2.4 5.9 L4.8 8.5 L9.7 2.9" fill="none" stroke="#3a3a3a" stroke-width="2.6" stroke-linejoin="round"/></svg></div>
<div class="t" style="left:630px;top:415px;color:#333333">世界杯附</div>
<div style="left:1px;top:431px;width:910px;height:42px;background:#bebebe;"></div>
<div style="left:2px;top:432px;width:72px;height:40px;background:#dde4ee;"></div>
<div class="c" style="left:1px;top:432px;width:72px;height:40px;line-height:40px;color:#333333">类型</div>
<div style="left:75px;top:432px;width:75px;height:40px;background:#dde4ee;"></div>
<div class="c" style="left:74px;top:432px;width:75px;height:40px;line-height:40px;color:#333333">日期</div>
<div style="left:151px;top:432px;width:72px;height:40px;background:#dde4ee;"></div>
<div class="c" style="left:150px;top:432px;width:72px;height:40px;line-height:40px;color:#333333">主场</div>
<div style="left:224px;top:432px;width:86px;height:40px;background:#dde4ee;"></div>
<div class="c" style="left:223px;top:432px;width:86px;height:40px;line-height:40px;color:#333333">比分(半场)</div>
<div style="left:311px;top:432px;width:39px;height:40px;background:#dde4ee;"></div>
<div class="c" style="left:310px;top:432px;width:39px;height:40px;line-height:40px;color:#333333">角球</div>
<div style="left:351px;top:432px;width:84px;height:40px;background:#dde4ee;"></div>
<div class="c" style="left:350px;top:432px;width:84px;height:40px;line-height:40px;color:#333333">客场</div>
<div style="left:436px;top:432px;width:150px;height:22px;background:#dde4ee;"></div>
<div style="left:587px;top:432px;width:188px;height:22px;background:#dde4ee;"></div>
<div style="left:776px;top:432px;width:134px;height:22px;background:#dde4ee;"></div>
<div style="left:436px;top:455px;width:40px;height:17px;background:#dde4ee;"></div>
<div class="c" style="left:436px;top:457px;width:40px;height:17px;line-height:17px;color:#333333">主</div>
<div style="left:477px;top:455px;width:66px;height:17px;background:#dde4ee;"></div>
<div class="c" style="left:477px;top:457px;width:66px;height:17px;line-height:17px;color:#333333">盘口</div>
<div style="left:544px;top:455px;width:42px;height:17px;background:#dde4ee;"></div>
<div class="c" style="left:544px;top:457px;width:42px;height:17px;line-height:17px;color:#333333">客</div>
<div style="left:587px;top:455px;width:56px;height:17px;background:#dde4ee;"></div>
<div class="c" style="left:587px;top:457px;width:56px;height:17px;line-height:17px;color:#333333">主</div>
<div style="left:644px;top:455px;width:57px;height:17px;background:#dde4ee;"></div>
<div class="c" style="left:644px;top:457px;width:57px;height:17px;line-height:17px;color:#333333">和</div>
<div style="left:702px;top:455px;width:73px;height:17px;background:#dde4ee;"></div>
<div class="c" style="left:702px;top:457px;width:73px;height:17px;line-height:17px;color:#333333">客</div>
<div style="left:776px;top:455px;width:38px;height:17px;background:#dde4ee;"></div>
<div class="c" style="left:776px;top:457px;width:38px;height:17px;line-height:17px;color:#333333">胜负</div>
<div style="left:815px;top:455px;width:38px;height:17px;background:#dde4ee;"></div>
<div class="c" style="left:815px;top:457px;width:38px;height:17px;line-height:17px;color:#333333">让球</div>
<div style="left:854px;top:455px;width:56px;height:17px;background:#dde4ee;"></div>
<div class="c" style="left:854px;top:457px;width:56px;height:17px;line-height:17px;color:#333333">进球数</div>
<div class="sel" style="left:459px;top:433px;width:59px;height:20px;line-height:18px"><span style="letter-spacing:0.5px">Crow*</span><i><svg width="6" height="5" viewBox="0 0 6 5"><path d="M0 0 H6 L3.4 5 H2.6 Z" fill="#000"/></svg></i></div>
<div class="sel" style="left:526px;top:433px;width:36px;height:20px;line-height:18px"><span style="">终</span><i><svg width="6" height="5" viewBox="0 0 6 5"><path d="M0 0 H6 L3.4 5 H2.6 Z" fill="#000"/></svg></i></div>
<div class="sel" style="left:617px;top:433px;width:84px;height:20px;line-height:18px"><span style="">胜平负均值</span><i><svg width="6" height="5" viewBox="0 0 6 5"><path d="M0 0 H6 L3.4 5 H2.6 Z" fill="#000"/></svg></i></div>
<div class="sel" style="left:710px;top:433px;width:35px;height:20px;line-height:18px"><span style="">终</span><i><svg width="6" height="5" viewBox="0 0 6 5"><path d="M0 0 H6 L3.4 5 H2.6 Z" fill="#000"/></svg></i></div>
<div class="sel" style="left:820px;top:433px;width:47px;height:20px;line-height:18px"><span style="">全场</span><i><svg width="6" height="5" viewBox="0 0 6 5"><path d="M0 0 H6 L3.4 5 H2.6 Z" fill="#000"/></svg></i></div>
<div style="left:1px;top:472px;width:910px;height:29px;background:#bebebe;"></div>
<div style="left:2px;top:473px;width:72px;height:27px;background:#f2632a;"></div>
<div style="left:75px;top:473px;width:75px;height:27px;background:#ffffff;"></div>
<div style="left:151px;top:473px;width:72px;height:27px;background:#ffffff;"></div>
<div style="left:224px;top:473px;width:86px;height:27px;background:#ffffff;"></div>
<div style="left:311px;top:473px;width:39px;height:27px;background:#ffffff;"></div>
<div style="left:351px;top:473px;width:84px;height:27px;background:#ffffff;"></div>
<div style="left:436px;top:473px;width:40px;height:27px;background:#fdfaf7;"></div>
<div style="left:477px;top:473px;width:66px;height:27px;background:#fdfaf7;"></div>
<div style="left:544px;top:473px;width:42px;height:27px;background:#fdfaf7;"></div>
<div style="left:587px;top:473px;width:56px;height:27px;background:#eff7fb;"></div>
<div style="left:644px;top:473px;width:57px;height:27px;background:#eff7fb;"></div>
<div style="left:702px;top:473px;width:73px;height:27px;background:#eff7fb;"></div>
<div style="left:776px;top:473px;width:38px;height:27px;background:#ffffff;"></div>
<div style="left:815px;top:473px;width:38px;height:27px;background:#ffffff;"></div>
<div style="left:854px;top:473px;width:56px;height:27px;background:#ffffff;"></div>
<div class="c" style="left:1px;top:474px;width:72px;height:27px;line-height:27px;color:#fff">南美预选</div>
<div class="c" style="left:75px;top:474px;width:75px;height:27px;line-height:27px;color:#333333">25-06-11</div>
<div class="c" style="left:150px;top:474px;width:72px;height:27px;line-height:27px;"><span style="color:#008000;-webkit-text-stroke:0.15px currentColor">秘鲁</span></div>
<div class="c" style="left:224px;top:474px;width:86px;height:27px;line-height:27px;color:#333333;letter-spacing:0.4px"><span style="color:#ff0000">0-0</span>(0-0)</div>
<div class="c" style="left:311px;top:474px;width:39px;height:27px;line-height:27px;color:#333333">2-0</div>
<div class="c" style="left:350px;top:474px;width:84px;height:27px;line-height:27px;"><span style="color:#000">厄瓜多尔</span><b class="card">1</b></div>
<div class="c" style="left:436px;top:474px;width:40px;height:27px;line-height:27px;color:#333333;letter-spacing:0.3px">0.74</div>
<div class="c" style="left:477px;top:474px;width:66px;height:27px;line-height:27px;color:#333333"><span class="ast">*</span>平/半</div>
<div class="c" style="left:544px;top:474px;width:42px;height:27px;line-height:27px;color:#333333;letter-spacing:0.3px">1.17</div>
<div class="c" style="left:587px;top:474px;width:56px;height:27px;line-height:27px;color:#333333;letter-spacing:0.3px">3.40</div>
<div class="c" style="left:644px;top:474px;width:57px;height:27px;line-height:27px;color:#333333;letter-spacing:0.3px">2.73</div>
<div class="c" style="left:702px;top:474px;width:73px;height:27px;line-height:27px;color:#333333;letter-spacing:0.3px">2.51</div>
<div class="c" style="left:775px;top:474px;width:38px;height:27px;line-height:27px;color:#0000ff;-webkit-text-stroke:0.3px currentColor">平</div>
<div class="c" style="left:814px;top:474px;width:38px;height:27px;line-height:27px;color:#ff0000;-webkit-text-stroke:0.3px currentColor">贏</div>
<div class="c" style="left:853px;top:474px;width:56px;height:27px;line-height:27px;color:#007000;-webkit-text-stroke:0.3px currentColor">小</div>
<div style="left:1px;top:500px;width:910px;height:29px;background:#bebebe;"></div>
<div style="left:2px;top:501px;width:72px;height:27px;background:#f2632a;"></div>
<div style="left:75px;top:501px;width:75px;height:27px;background:#f0f0f0;"></div>
<div style="left:151px;top:501px;width:72px;height:27px;background:#f0f0f0;"></div>
<div style="left:224px;top:501px;width:86px;height:27px;background:#f0f0f0;"></div>
<div style="left:311px;top:501px;width:39px;height:27px;background:#f0f0f0;"></div>
<div style="left:351px;top:501px;width:84px;height:27px;background:#f0f0f0;"></div>
<div style="left:436px;top:501px;width:40px;height:27px;background:#fdfaf7;"></div>
<div style="left:477px;top:501px;width:66px;height:27px;background:#fdfaf7;"></div>
<div style="left:544px;top:501px;width:42px;height:27px;background:#fdfaf7;"></div>
<div style="left:587px;top:501px;width:56px;height:27px;background:#eff7fb;"></div>
<div style="left:644px;top:501px;width:57px;height:27px;background:#eff7fb;"></div>
<div style="left:702px;top:501px;width:73px;height:27px;background:#eff7fb;"></div>
<div style="left:776px;top:501px;width:38px;height:27px;background:#f0f0f0;"></div>
<div style="left:815px;top:501px;width:38px;height:27px;background:#f0f0f0;"></div>
<div style="left:854px;top:501px;width:56px;height:27px;background:#f0f0f0;"></div>
<div class="c" style="left:1px;top:502px;width:72px;height:27px;line-height:27px;color:#fff">南美预选</div>
<div class="c" style="left:75px;top:502px;width:75px;height:27px;line-height:27px;color:#333333">25-06-07</div>
<div class="c" style="left:150px;top:502px;width:72px;height:27px;line-height:27px;"><span style="color:#000">哥伦比亚</span></div>
<div class="c" style="left:224px;top:502px;width:86px;height:27px;line-height:27px;color:#333333;letter-spacing:0.4px"><span style="color:#ff0000">0-0</span>(0-0)</div>
<div class="c" style="left:311px;top:502px;width:39px;height:27px;line-height:27px;color:#333333">2-4</div>
<div class="c" style="left:350px;top:502px;width:84px;height:27px;line-height:27px;"><span style="color:#008000;-webkit-text-stroke:0.15px currentColor">秘鲁</span></div>
<div class="c" style="left:436px;top:502px;width:40px;height:27px;line-height:27px;color:#333333;letter-spacing:0.3px">1.09</div>
<div class="c" style="left:476px;top:502px;width:66px;height:27px;line-height:27px;color:#333333">球半</div>
<div class="c" style="left:544px;top:502px;width:42px;height:27px;line-height:27px;color:#333333;letter-spacing:0.3px">0.80</div>
<div class="c" style="left:587px;top:502px;width:56px;height:27px;line-height:27px;color:#333333;letter-spacing:0.3px">1.31</div>
<div class="c" style="left:644px;top:502px;width:57px;height:27px;line-height:27px;color:#333333;letter-spacing:0.3px">4.98</div>
<div class="c" style="left:702px;top:502px;width:73px;height:27px;line-height:27px;color:#333333;letter-spacing:0.3px">10.47</div>
<div class="c" style="left:775px;top:502px;width:38px;height:27px;line-height:27px;color:#0000ff;-webkit-text-stroke:0.3px currentColor">平</div>
<div class="c" style="left:814px;top:502px;width:38px;height:27px;line-height:27px;color:#ff0000;-webkit-text-stroke:0.3px currentColor">贏</div>
<div class="c" style="left:853px;top:502px;width:56px;height:27px;line-height:27px;color:#007000;-webkit-text-stroke:0.3px currentColor">小</div>
<div style="left:1px;top:528px;width:910px;height:29px;background:#bebebe;"></div>
<div style="left:2px;top:529px;width:72px;height:27px;background:#f2632a;"></div>
<div style="left:75px;top:529px;width:75px;height:27px;background:#ffffff;"></div>
<div style="left:151px;top:529px;width:72px;height:27px;background:#ffffff;"></div>
<div style="left:224px;top:529px;width:86px;height:27px;background:#ffffff;"></div>
<div style="left:311px;top:529px;width:39px;height:27px;background:#ffffff;"></div>
<div style="left:351px;top:529px;width:84px;height:27px;background:#ffffff;"></div>
<div style="left:436px;top:529px;width:40px;height:27px;background:#fdfaf7;"></div>
<div style="left:477px;top:529px;width:66px;height:27px;background:#fdfaf7;"></div>
<div style="left:544px;top:529px;width:42px;height:27px;background:#fdfaf7;"></div>
<div style="left:587px;top:529px;width:56px;height:27px;background:#eff7fb;"></div>
<div style="left:644px;top:529px;width:57px;height:27px;background:#eff7fb;"></div>
<div style="left:702px;top:529px;width:73px;height:27px;background:#eff7fb;"></div>
<div style="left:776px;top:529px;width:38px;height:27px;background:#ffffff;"></div>
<div style="left:815px;top:529px;width:38px;height:27px;background:#ffffff;"></div>
<div style="left:854px;top:529px;width:56px;height:27px;background:#ffffff;"></div>
<div class="c" style="left:1px;top:530px;width:72px;height:27px;line-height:27px;color:#fff">南美预选</div>
<div class="c" style="left:75px;top:530px;width:75px;height:27px;line-height:27px;color:#333333">25-03-26</div>
<div class="c" style="left:150px;top:530px;width:72px;height:27px;line-height:27px;"><span style="color:#000">委内瑞拉</span></div>
<div class="c" style="left:224px;top:530px;width:86px;height:27px;line-height:27px;color:#333333;letter-spacing:0.4px"><span style="color:#ff0000">1-0</span>(1-0)</div>
<div class="c" style="left:311px;top:530px;width:39px;height:27px;line-height:27px;color:#333333">4-1</div>
<div class="c" style="left:350px;top:530px;width:84px;height:27px;line-height:27px;"><span style="color:#008000;-webkit-text-stroke:0.15px currentColor">秘鲁</span></div>
<div class="c" style="left:436px;top:530px;width:40px;height:27px;line-height:27px;color:#333333;letter-spacing:0.3px">1.03</div>
<div class="c" style="left:476px;top:530px;width:66px;height:27px;line-height:27px;color:#333333">半球</div>
<div class="c" style="left:544px;top:530px;width:42px;height:27px;line-height:27px;color:#333333;letter-spacing:0.3px">0.86</div>
<div class="c" style="left:587px;top:530px;width:56px;height:27px;line-height:27px;color:#333333;letter-spacing:0.3px">2.03</div>
<div class="c" style="left:644px;top:530px;width:57px;height:27px;line-height:27px;color:#333333;letter-spacing:0.3px">3.04</div>
<div class="c" style="left:702px;top:530px;width:73px;height:27px;line-height:27px;color:#333333;letter-spacing:0.3px">4.20</div>
<div class="c" style="left:775px;top:530px;width:38px;height:27px;line-height:27px;color:#007000;-webkit-text-stroke:0.3px currentColor">負</div>
<div class="c" style="left:814px;top:530px;width:38px;height:27px;line-height:27px;color:#007000;-webkit-text-stroke:0.3px currentColor">輸</div>
<div class="c" style="left:853px;top:530px;width:56px;height:27px;line-height:27px;color:#007000;-webkit-text-stroke:0.3px currentColor">小</div>
<div style="left:1px;top:556px;width:910px;height:29px;background:#bebebe;"></div>
<div style="left:2px;top:557px;width:72px;height:27px;background:#f2632a;"></div>
<div style="left:75px;top:557px;width:75px;height:27px;background:#f0f0f0;"></div>
<div style="left:151px;top:557px;width:72px;height:27px;background:#f0f0f0;"></div>
<div style="left:224px;top:557px;width:86px;height:27px;background:#f0f0f0;"></div>
<div style="left:311px;top:557px;width:39px;height:27px;background:#f0f0f0;"></div>
<div style="left:351px;top:557px;width:84px;height:27px;background:#f0f0f0;"></div>
<div style="left:436px;top:557px;width:40px;height:27px;background:#fdfaf7;"></div>
<div style="left:477px;top:557px;width:66px;height:27px;background:#fdfaf7;"></div>
<div style="left:544px;top:557px;width:42px;height:27px;background:#fdfaf7;"></div>
<div style="left:587px;top:557px;width:56px;height:27px;background:#eff7fb;"></div>
<div style="left:644px;top:557px;width:57px;height:27px;background:#eff7fb;"></div>
<div style="left:702px;top:557px;width:73px;height:27px;background:#eff7fb;"></div>
<div style="left:776px;top:557px;width:38px;height:27px;background:#f0f0f0;"></div>
<div style="left:815px;top:557px;width:38px;height:27px;background:#f0f0f0;"></div>
<div style="left:854px;top:557px;width:56px;height:27px;background:#f0f0f0;"></div>
<div class="c" style="left:1px;top:558px;width:72px;height:27px;line-height:27px;color:#fff">南美预选</div>
<div class="c" style="left:75px;top:558px;width:75px;height:27px;line-height:27px;color:#333333">25-03-21</div>
<div class="c" style="left:150px;top:558px;width:72px;height:27px;line-height:27px;"><span style="color:#008000;-webkit-text-stroke:0.15px currentColor">秘鲁</span></div>
<div class="c" style="left:224px;top:558px;width:86px;height:27px;line-height:27px;color:#333333;letter-spacing:0.4px"><span style="color:#ff0000">3-1</span>(2-0)</div>
<div class="c" style="left:311px;top:558px;width:39px;height:27px;line-height:27px;color:#333333">3-4</div>
<div class="c" style="left:350px;top:558px;width:84px;height:27px;line-height:27px;"><span style="color:#000">玻利维亚</span></div>
<div class="c" style="left:436px;top:558px;width:40px;height:27px;line-height:27px;color:#333333;letter-spacing:0.3px">0.94</div>
<div class="c" style="left:476px;top:558px;width:66px;height:27px;line-height:27px;color:#333333">一球</div>
<div class="c" style="left:544px;top:558px;width:42px;height:27px;line-height:27px;color:#333333;letter-spacing:0.3px">0.95</div>
<div class="c" style="left:587px;top:558px;width:56px;height:27px;line-height:27px;color:#333333;letter-spacing:0.3px">1.45</div>
<div class="c" style="left:644px;top:558px;width:57px;height:27px;line-height:27px;color:#333333;letter-spacing:0.3px">4.07</div>
<div class="c" style="left:702px;top:558px;width:73px;height:27px;line-height:27px;color:#333333;letter-spacing:0.3px">7.88</div>
<div class="c" style="left:775px;top:558px;width:38px;height:27px;line-height:27px;color:#ff0000;-webkit-text-stroke:0.3px currentColor">勝</div>
<div class="c" style="left:814px;top:558px;width:38px;height:27px;line-height:27px;color:#ff0000;-webkit-text-stroke:0.3px currentColor">贏</div>
<div class="c" style="left:853px;top:558px;width:56px;height:27px;line-height:27px;color:#ff0000;-webkit-text-stroke:0.3px currentColor">大</div>
<div style="left:1px;top:584px;width:910px;height:29px;background:#bebebe;"></div>
<div style="left:2px;top:585px;width:72px;height:27px;background:#f2632a;"></div>
<div style="left:75px;top:585px;width:75px;height:27px;background:#ffffff;"></div>
<div style="left:151px;top:585px;width:72px;height:27px;background:#ffffff;"></div>
<div style="left:224px;top:585px;width:86px;height:27px;background:#ffffff;"></div>
<div style="left:311px;top:585px;width:39px;height:27px;background:#ffffff;"></div>
<div style="left:351px;top:585px;width:84px;height:27px;background:#ffffff;"></div>
<div style="left:436px;top:585px;width:40px;height:27px;background:#fdfaf7;"></div>
<div style="left:477px;top:585px;width:66px;height:27px;background:#fdfaf7;"></div>
<div style="left:544px;top:585px;width:42px;height:27px;background:#fdfaf7;"></div>
<div style="left:587px;top:585px;width:56px;height:27px;background:#eff7fb;"></div>
<div style="left:644px;top:585px;width:57px;height:27px;background:#eff7fb;"></div>
<div style="left:702px;top:585px;width:73px;height:27px;background:#eff7fb;"></div>
<div style="left:776px;top:585px;width:38px;height:27px;background:#ffffff;"></div>
<div style="left:815px;top:585px;width:38px;height:27px;background:#ffffff;"></div>
<div style="left:854px;top:585px;width:56px;height:27px;background:#ffffff;"></div>
<div class="c" style="left:1px;top:586px;width:72px;height:27px;line-height:27px;color:#fff">南美预选</div>
<div class="c" style="left:75px;top:586px;width:75px;height:27px;line-height:27px;color:#333333">24-11-20</div>
<div class="c" style="left:150px;top:586px;width:72px;height:27px;line-height:27px;"><span style="color:#000">阿根廷</span></div>
<div class="c" style="left:224px;top:586px;width:86px;height:27px;line-height:27px;color:#333333;letter-spacing:0.4px"><span style="color:#ff0000">1-0</span>(0-0)</div>
<div class="c" style="left:311px;top:586px;width:39px;height:27px;line-height:27px;color:#333333">2-1</div>
<div class="c" style="left:350px;top:586px;width:84px;height:27px;line-height:27px;"><span style="color:#008000;-webkit-text-stroke:0.15px currentColor">秘鲁</span></div>
<div class="c" style="left:436px;top:586px;width:40px;height:27px;line-height:27px;color:#333333;letter-spacing:0.3px">0.96</div>
<div class="c" style="left:476px;top:586px;width:66px;height:27px;line-height:27px;color:#333333">两球</div>
<div class="c" style="left:544px;top:586px;width:42px;height:27px;line-height:27px;color:#333333;letter-spacing:0.3px">0.93</div>
<div class="c" style="left:587px;top:586px;width:56px;height:27px;line-height:27px;color:#333333;letter-spacing:0.3px">1.16</div>
<div class="c" style="left:644px;top:586px;width:57px;height:27px;line-height:27px;color:#333333;letter-spacing:0.3px">6.89</div>
<div class="c" style="left:702px;top:586px;width:73px;height:27px;line-height:27px;color:#333333;letter-spacing:0.3px">19.45</div>
<div class="c" style="left:775px;top:586px;width:38px;height:27px;line-height:27px;color:#007000;-webkit-text-stroke:0.3px currentColor">負</div>
<div class="c" style="left:814px;top:586px;width:38px;height:27px;line-height:27px;color:#ff0000;-webkit-text-stroke:0.3px currentColor">贏</div>
<div class="c" style="left:853px;top:586px;width:56px;height:27px;line-height:27px;color:#007000;-webkit-text-stroke:0.3px currentColor">小</div>
<div style="left:1px;top:612px;width:910px;height:29px;background:#bebebe;"></div>
<div style="left:2px;top:613px;width:72px;height:27px;background:#f2632a;"></div>
<div style="left:75px;top:613px;width:75px;height:27px;background:#f0f0f0;"></div>
<div style="left:151px;top:613px;width:72px;height:27px;background:#f0f0f0;"></div>
<div style="left:224px;top:613px;width:86px;height:27px;background:#f0f0f0;"></div>
<div style="left:311px;top:613px;width:39px;height:27px;background:#f0f0f0;"></div>
<div style="left:351px;top:613px;width:84px;height:27px;background:#f0f0f0;"></div>
<div style="left:436px;top:613px;width:40px;height:27px;background:#fdfaf7;"></div>
<div style="left:477px;top:613px;width:66px;height:27px;background:#fdfaf7;"></div>
<div style="left:544px;top:613px;width:42px;height:27px;background:#fdfaf7;"></div>
<div style="left:587px;top:613px;width:56px;height:27px;background:#eff7fb;"></div>
<div style="left:644px;top:613px;width:57px;height:27px;background:#eff7fb;"></div>
<div style="left:702px;top:613px;width:73px;height:27px;background:#eff7fb;"></div>
<div style="left:776px;top:613px;width:38px;height:27px;background:#f0f0f0;"></div>
<div style="left:815px;top:613px;width:38px;height:27px;background:#f0f0f0;"></div>
<div style="left:854px;top:613px;width:56px;height:27px;background:#f0f0f0;"></div>
<div class="c" style="left:1px;top:614px;width:72px;height:27px;line-height:27px;color:#fff">南美预选</div>
<div class="c" style="left:75px;top:614px;width:75px;height:27px;line-height:27px;color:#333333">24-11-16</div>
<div class="c" style="left:150px;top:614px;width:72px;height:27px;line-height:27px;"><span style="color:#008000;-webkit-text-stroke:0.15px currentColor">秘鲁</span></div>
<div class="c" style="left:224px;top:614px;width:86px;height:27px;line-height:27px;color:#333333;letter-spacing:0.4px"><span style="color:#ff0000">0-0</span>(0-0)</div>
<div class="c" style="left:311px;top:614px;width:39px;height:27px;line-height:27px;color:#333333">4-8</div>
<div class="c" style="left:350px;top:614px;width:84px;height:27px;line-height:27px;"><span style="color:#000">智利</span></div>
<div class="c" style="left:436px;top:614px;width:40px;height:27px;line-height:27px;color:#333333;letter-spacing:0.3px">0.86</div>
<div class="c" style="left:477px;top:614px;width:66px;height:27px;line-height:27px;color:#333333">平/半</div>
<div class="c" style="left:544px;top:614px;width:42px;height:27px;line-height:27px;color:#333333;letter-spacing:0.3px">1.03</div>
<div class="c" style="left:587px;top:614px;width:56px;height:27px;line-height:27px;color:#333333;letter-spacing:0.3px">2.27</div>
<div class="c" style="left:644px;top:614px;width:57px;height:27px;line-height:27px;color:#333333;letter-spacing:0.3px">2.71</div>
<div class="c" style="left:702px;top:614px;width:73px;height:27px;line-height:27px;color:#333333;letter-spacing:0.3px">3.95</div>
<div class="c" style="left:775px;top:614px;width:38px;height:27px;line-height:27px;color:#0000ff;-webkit-text-stroke:0.3px currentColor">平</div>
<div class="c" style="left:814px;top:614px;width:38px;height:27px;line-height:27px;color:#007000;-webkit-text-stroke:0.3px currentColor">輸</div>
<div class="c" style="left:853px;top:614px;width:56px;height:27px;line-height:27px;color:#007000;-webkit-text-stroke:0.3px currentColor">小</div>
<div style="left:1px;top:640px;width:910px;height:29px;background:#bebebe;"></div>
<div style="left:2px;top:641px;width:72px;height:27px;background:#f2632a;"></div>
<div style="left:75px;top:641px;width:75px;height:27px;background:#ffffff;"></div>
<div style="left:151px;top:641px;width:72px;height:27px;background:#ffffff;"></div>
<div style="left:224px;top:641px;width:86px;height:27px;background:#ffffff;"></div>
<div style="left:311px;top:641px;width:39px;height:27px;background:#ffffff;"></div>
<div style="left:351px;top:641px;width:84px;height:27px;background:#ffffff;"></div>
<div style="left:436px;top:641px;width:40px;height:27px;background:#fdfaf7;"></div>
<div style="left:477px;top:641px;width:66px;height:27px;background:#fdfaf7;"></div>
<div style="left:544px;top:641px;width:42px;height:27px;background:#fdfaf7;"></div>
<div style="left:587px;top:641px;width:56px;height:27px;background:#eff7fb;"></div>
<div style="left:644px;top:641px;width:57px;height:27px;background:#eff7fb;"></div>
<div style="left:702px;top:641px;width:73px;height:27px;background:#eff7fb;"></div>
<div style="left:776px;top:641px;width:38px;height:27px;background:#ffffff;"></div>
<div style="left:815px;top:641px;width:38px;height:27px;background:#ffffff;"></div>
<div style="left:854px;top:641px;width:56px;height:27px;background:#ffffff;"></div>
<div class="c" style="left:1px;top:642px;width:72px;height:27px;line-height:27px;color:#fff">南美预选</div>
<div class="c" style="left:75px;top:642px;width:75px;height:27px;line-height:27px;color:#333333">24-10-16</div>
<div class="c" style="left:150px;top:642px;width:72px;height:27px;line-height:27px;"><span style="color:#000">巴西</span></div>
<div class="c" style="left:224px;top:642px;width:86px;height:27px;line-height:27px;color:#333333;letter-spacing:0.4px"><span style="color:#ff0000">4-0</span>(1-0)</div>
<div class="c" style="left:311px;top:642px;width:39px;height:27px;line-height:27px;color:#333333">6-1</div>
<div class="c" style="left:350px;top:642px;width:84px;height:27px;line-height:27px;"><span style="color:#008000;-webkit-text-stroke:0.15px currentColor">秘鲁</span></div>
<div class="c" style="left:436px;top:642px;width:40px;height:27px;line-height:27px;color:#333333;letter-spacing:0.3px">0.95</div>
<div class="c" style="left:477px;top:642px;width:66px;height:27px;line-height:27px;color:#333333">球半/两</div>
<div class="c" style="left:544px;top:642px;width:42px;height:27px;line-height:27px;color:#333333;letter-spacing:0.3px">0.94</div>
<div class="c" style="left:587px;top:642px;width:56px;height:27px;line-height:27px;color:#333333;letter-spacing:0.3px">1.19</div>
<div class="c" style="left:644px;top:642px;width:57px;height:27px;line-height:27px;color:#333333;letter-spacing:0.3px">6.26</div>
<div class="c" style="left:702px;top:642px;width:73px;height:27px;line-height:27px;color:#333333;letter-spacing:0.3px">16.12</div>
<div class="c" style="left:775px;top:642px;width:38px;height:27px;line-height:27px;color:#007000;-webkit-text-stroke:0.3px currentColor">負</div>
<div class="c" style="left:814px;top:642px;width:38px;height:27px;line-height:27px;color:#007000;-webkit-text-stroke:0.3px currentColor">輸</div>
<div class="c" style="left:853px;top:642px;width:56px;height:27px;line-height:27px;color:#ff0000;-webkit-text-stroke:0.3px currentColor">大</div>
<div style="left:1px;top:668px;width:910px;height:29px;background:#bebebe;"></div>
<div style="left:2px;top:669px;width:72px;height:27px;background:#f2632a;"></div>
<div style="left:75px;top:669px;width:75px;height:27px;background:#f0f0f0;"></div>
<div style="left:151px;top:669px;width:72px;height:27px;background:#f0f0f0;"></div>
<div style="left:224px;top:669px;width:86px;height:27px;background:#f0f0f0;"></div>
<div style="left:311px;top:669px;width:39px;height:27px;background:#f0f0f0;"></div>
<div style="left:351px;top:669px;width:84px;height:27px;background:#f0f0f0;"></div>
<div style="left:436px;top:669px;width:40px;height:27px;background:#fdfaf7;"></div>
<div style="left:477px;top:669px;width:66px;height:27px;background:#fdfaf7;"></div>
<div style="left:544px;top:669px;width:42px;height:27px;background:#fdfaf7;"></div>
<div style="left:587px;top:669px;width:56px;height:27px;background:#eff7fb;"></div>
<div style="left:644px;top:669px;width:57px;height:27px;background:#eff7fb;"></div>
<div style="left:702px;top:669px;width:73px;height:27px;background:#eff7fb;"></div>
<div style="left:776px;top:669px;width:38px;height:27px;background:#f0f0f0;"></div>
<div style="left:815px;top:669px;width:38px;height:27px;background:#f0f0f0;"></div>
<div style="left:854px;top:669px;width:56px;height:27px;background:#f0f0f0;"></div>
<div class="c" style="left:1px;top:670px;width:72px;height:27px;line-height:27px;color:#fff">南美预选</div>
<div class="c" style="left:75px;top:670px;width:75px;height:27px;line-height:27px;color:#333333">24-10-12</div>
<div class="c" style="left:150px;top:670px;width:72px;height:27px;line-height:27px;"><span style="color:#008000;-webkit-text-stroke:0.15px currentColor">秘鲁</span></div>
<div class="c" style="left:224px;top:670px;width:86px;height:27px;line-height:27px;color:#333333;letter-spacing:0.4px"><span style="color:#ff0000">1-0</span>(0-0)</div>
<div class="c" style="left:311px;top:670px;width:39px;height:27px;line-height:27px;color:#333333">5-2</div>
<div class="c" style="left:350px;top:670px;width:84px;height:27px;line-height:27px;"><span style="color:#000">乌拉圭</span></div>
<div class="c" style="left:436px;top:670px;width:40px;height:27px;line-height:27px;color:#333333;letter-spacing:0.3px">0.91</div>
<div class="c" style="left:477px;top:670px;width:66px;height:27px;line-height:27px;color:#333333"><span class="ast">*</span>半球</div>
<div class="c" style="left:544px;top:670px;width:42px;height:27px;line-height:27px;color:#333333;letter-spacing:0.3px">0.98</div>
<div class="c" style="left:587px;top:670px;width:56px;height:27px;line-height:27px;color:#333333;letter-spacing:0.3px">4.69</div>
<div class="c" style="left:644px;top:670px;width:57px;height:27px;line-height:27px;color:#333333;letter-spacing:0.3px">3.11</div>
<div class="c" style="left:702px;top:670px;width:73px;height:27px;line-height:27px;color:#333333;letter-spacing:0.3px">1.89</div>
<div class="c" style="left:775px;top:670px;width:38px;height:27px;line-height:27px;color:#ff0000;-webkit-text-stroke:0.3px currentColor">勝</div>
<div class="c" style="left:814px;top:670px;width:38px;height:27px;line-height:27px;color:#ff0000;-webkit-text-stroke:0.3px currentColor">贏</div>
<div class="c" style="left:853px;top:670px;width:56px;height:27px;line-height:27px;color:#007000;-webkit-text-stroke:0.3px currentColor">小</div>
<div style="left:1px;top:696px;width:910px;height:29px;background:#bebebe;"></div>
<div style="left:2px;top:697px;width:72px;height:27px;background:#f2632a;"></div>
<div style="left:75px;top:697px;width:75px;height:27px;background:#ffffff;"></div>
<div style="left:151px;top:697px;width:72px;height:27px;background:#ffffff;"></div>
<div style="left:224px;top:697px;width:86px;height:27px;background:#ffffff;"></div>
<div style="left:311px;top:697px;width:39px;height:27px;background:#ffffff;"></div>
<div style="left:351px;top:697px;width:84px;height:27px;background:#ffffff;"></div>
<div style="left:436px;top:697px;width:40px;height:27px;background:#fdfaf7;"></div>
<div style="left:477px;top:697px;width:66px;height:27px;background:#fdfaf7;"></div>
<div style="left:544px;top:697px;width:42px;height:27px;background:#fdfaf7;"></div>
<div style="left:587px;top:697px;width:56px;height:27px;background:#eff7fb;"></div>
<div style="left:644px;top:697px;width:57px;height:27px;background:#eff7fb;"></div>
<div style="left:702px;top:697px;width:73px;height:27px;background:#eff7fb;"></div>
<div style="left:776px;top:697px;width:38px;height:27px;background:#ffffff;"></div>
<div style="left:815px;top:697px;width:38px;height:27px;background:#ffffff;"></div>
<div style="left:854px;top:697px;width:56px;height:27px;background:#ffffff;"></div>
<div class="c" style="left:1px;top:698px;width:72px;height:27px;line-height:27px;color:#fff">南美预选</div>
<div class="c" style="left:75px;top:698px;width:75px;height:27px;line-height:27px;color:#333333">24-09-11</div>
<div class="c" style="left:150px;top:698px;width:72px;height:27px;line-height:27px;"><span style="color:#000">厄瓜多尔</span></div>
<div class="c" style="left:224px;top:698px;width:86px;height:27px;line-height:27px;color:#333333;letter-spacing:0.4px"><span style="color:#ff0000">1-0</span>(0-0)</div>
<div class="c" style="left:311px;top:698px;width:39px;height:27px;line-height:27px;color:#333333">8-0</div>
<div class="c" style="left:350px;top:698px;width:84px;height:27px;line-height:27px;"><span style="color:#008000;-webkit-text-stroke:0.15px currentColor">秘鲁</span></div>
<div class="c" style="left:436px;top:698px;width:40px;height:27px;line-height:27px;color:#333333;letter-spacing:0.3px">1.06</div>
<div class="c" style="left:477px;top:698px;width:66px;height:27px;line-height:27px;color:#333333">一/球半</div>
<div class="c" style="left:544px;top:698px;width:42px;height:27px;line-height:27px;color:#333333;letter-spacing:0.3px">0.83</div>
<div class="c" style="left:587px;top:698px;width:56px;height:27px;line-height:27px;color:#333333;letter-spacing:0.3px">1.39</div>
<div class="c" style="left:644px;top:698px;width:57px;height:27px;line-height:27px;color:#333333;letter-spacing:0.3px">4.09</div>
<div class="c" style="left:702px;top:698px;width:73px;height:27px;line-height:27px;color:#333333;letter-spacing:0.3px">9.82</div>
<div class="c" style="left:775px;top:698px;width:38px;height:27px;line-height:27px;color:#007000;-webkit-text-stroke:0.3px currentColor">負</div>
<div class="c" style="left:814px;top:698px;width:38px;height:27px;line-height:27px;color:#ff0000;-webkit-text-stroke:0.3px currentColor">贏</div>
<div class="c" style="left:853px;top:698px;width:56px;height:27px;line-height:27px;color:#007000;-webkit-text-stroke:0.3px currentColor">小</div>
<div style="left:1px;top:724px;width:910px;height:29px;background:#bebebe;"></div>
<div style="left:2px;top:725px;width:72px;height:27px;background:#f2632a;"></div>
<div style="left:75px;top:725px;width:75px;height:27px;background:#f0f0f0;"></div>
<div style="left:151px;top:725px;width:72px;height:27px;background:#f0f0f0;"></div>
<div style="left:224px;top:725px;width:86px;height:27px;background:#f0f0f0;"></div>
<div style="left:311px;top:725px;width:39px;height:27px;background:#f0f0f0;"></div>
<div style="left:351px;top:725px;width:84px;height:27px;background:#f0f0f0;"></div>
<div style="left:436px;top:725px;width:40px;height:27px;background:#fdfaf7;"></div>
<div style="left:477px;top:725px;width:66px;height:27px;background:#fdfaf7;"></div>
<div style="left:544px;top:725px;width:42px;height:27px;background:#fdfaf7;"></div>
<div style="left:587px;top:725px;width:56px;height:27px;background:#eff7fb;"></div>
<div style="left:644px;top:725px;width:57px;height:27px;background:#eff7fb;"></div>
<div style="left:702px;top:725px;width:73px;height:27px;background:#eff7fb;"></div>
<div style="left:776px;top:725px;width:38px;height:27px;background:#f0f0f0;"></div>
<div style="left:815px;top:725px;width:38px;height:27px;background:#f0f0f0;"></div>
<div style="left:854px;top:725px;width:56px;height:27px;background:#f0f0f0;"></div>
<div class="c" style="left:1px;top:726px;width:72px;height:27px;line-height:27px;color:#fff">南美预选</div>
<div class="c" style="left:75px;top:726px;width:75px;height:27px;line-height:27px;color:#333333">24-09-07</div>
<div class="c" style="left:150px;top:726px;width:72px;height:27px;line-height:27px;"><span style="color:#008000;-webkit-text-stroke:0.15px currentColor">秘鲁</span></div>
<div class="c" style="left:224px;top:726px;width:86px;height:27px;line-height:27px;color:#333333;letter-spacing:0.4px"><span style="color:#ff0000">1-1</span>(0-0)</div>
<div class="c" style="left:311px;top:726px;width:39px;height:27px;line-height:27px;color:#333333">5-10</div>
<div class="c" style="left:350px;top:726px;width:84px;height:27px;line-height:27px;"><span style="color:#000">哥伦比亚</span></div>
<div class="c" style="left:436px;top:726px;width:40px;height:27px;line-height:27px;color:#333333;letter-spacing:0.3px">1.00</div>
<div class="c" style="left:477px;top:726px;width:66px;height:27px;line-height:27px;color:#333333"><span class="ast">*</span>半球</div>
<div class="c" style="left:544px;top:726px;width:42px;height:27px;line-height:27px;color:#333333;letter-spacing:0.3px">0.89</div>
<div class="c" style="left:587px;top:726px;width:56px;height:27px;line-height:27px;color:#333333;letter-spacing:0.3px">5.44</div>
<div class="c" style="left:644px;top:726px;width:57px;height:27px;line-height:27px;color:#333333;letter-spacing:0.3px">3.10</div>
<div class="c" style="left:702px;top:726px;width:73px;height:27px;line-height:27px;color:#333333;letter-spacing:0.3px">1.80</div>
<div class="c" style="left:775px;top:726px;width:38px;height:27px;line-height:27px;color:#0000ff;-webkit-text-stroke:0.3px currentColor">平</div>
<div class="c" style="left:814px;top:726px;width:38px;height:27px;line-height:27px;color:#ff0000;-webkit-text-stroke:0.3px currentColor">贏</div>
<div class="c" style="left:853px;top:726px;width:56px;height:27px;line-height:27px;color:#ff0000;-webkit-text-stroke:0.3px currentColor">大</div>
<div style="left:1px;top:752px;width:910px;height:29px;background:#bebebe;"></div>
<div style="left:2px;top:753px;width:908px;height:27px;background:#ffffff;"></div>
</body></html>
